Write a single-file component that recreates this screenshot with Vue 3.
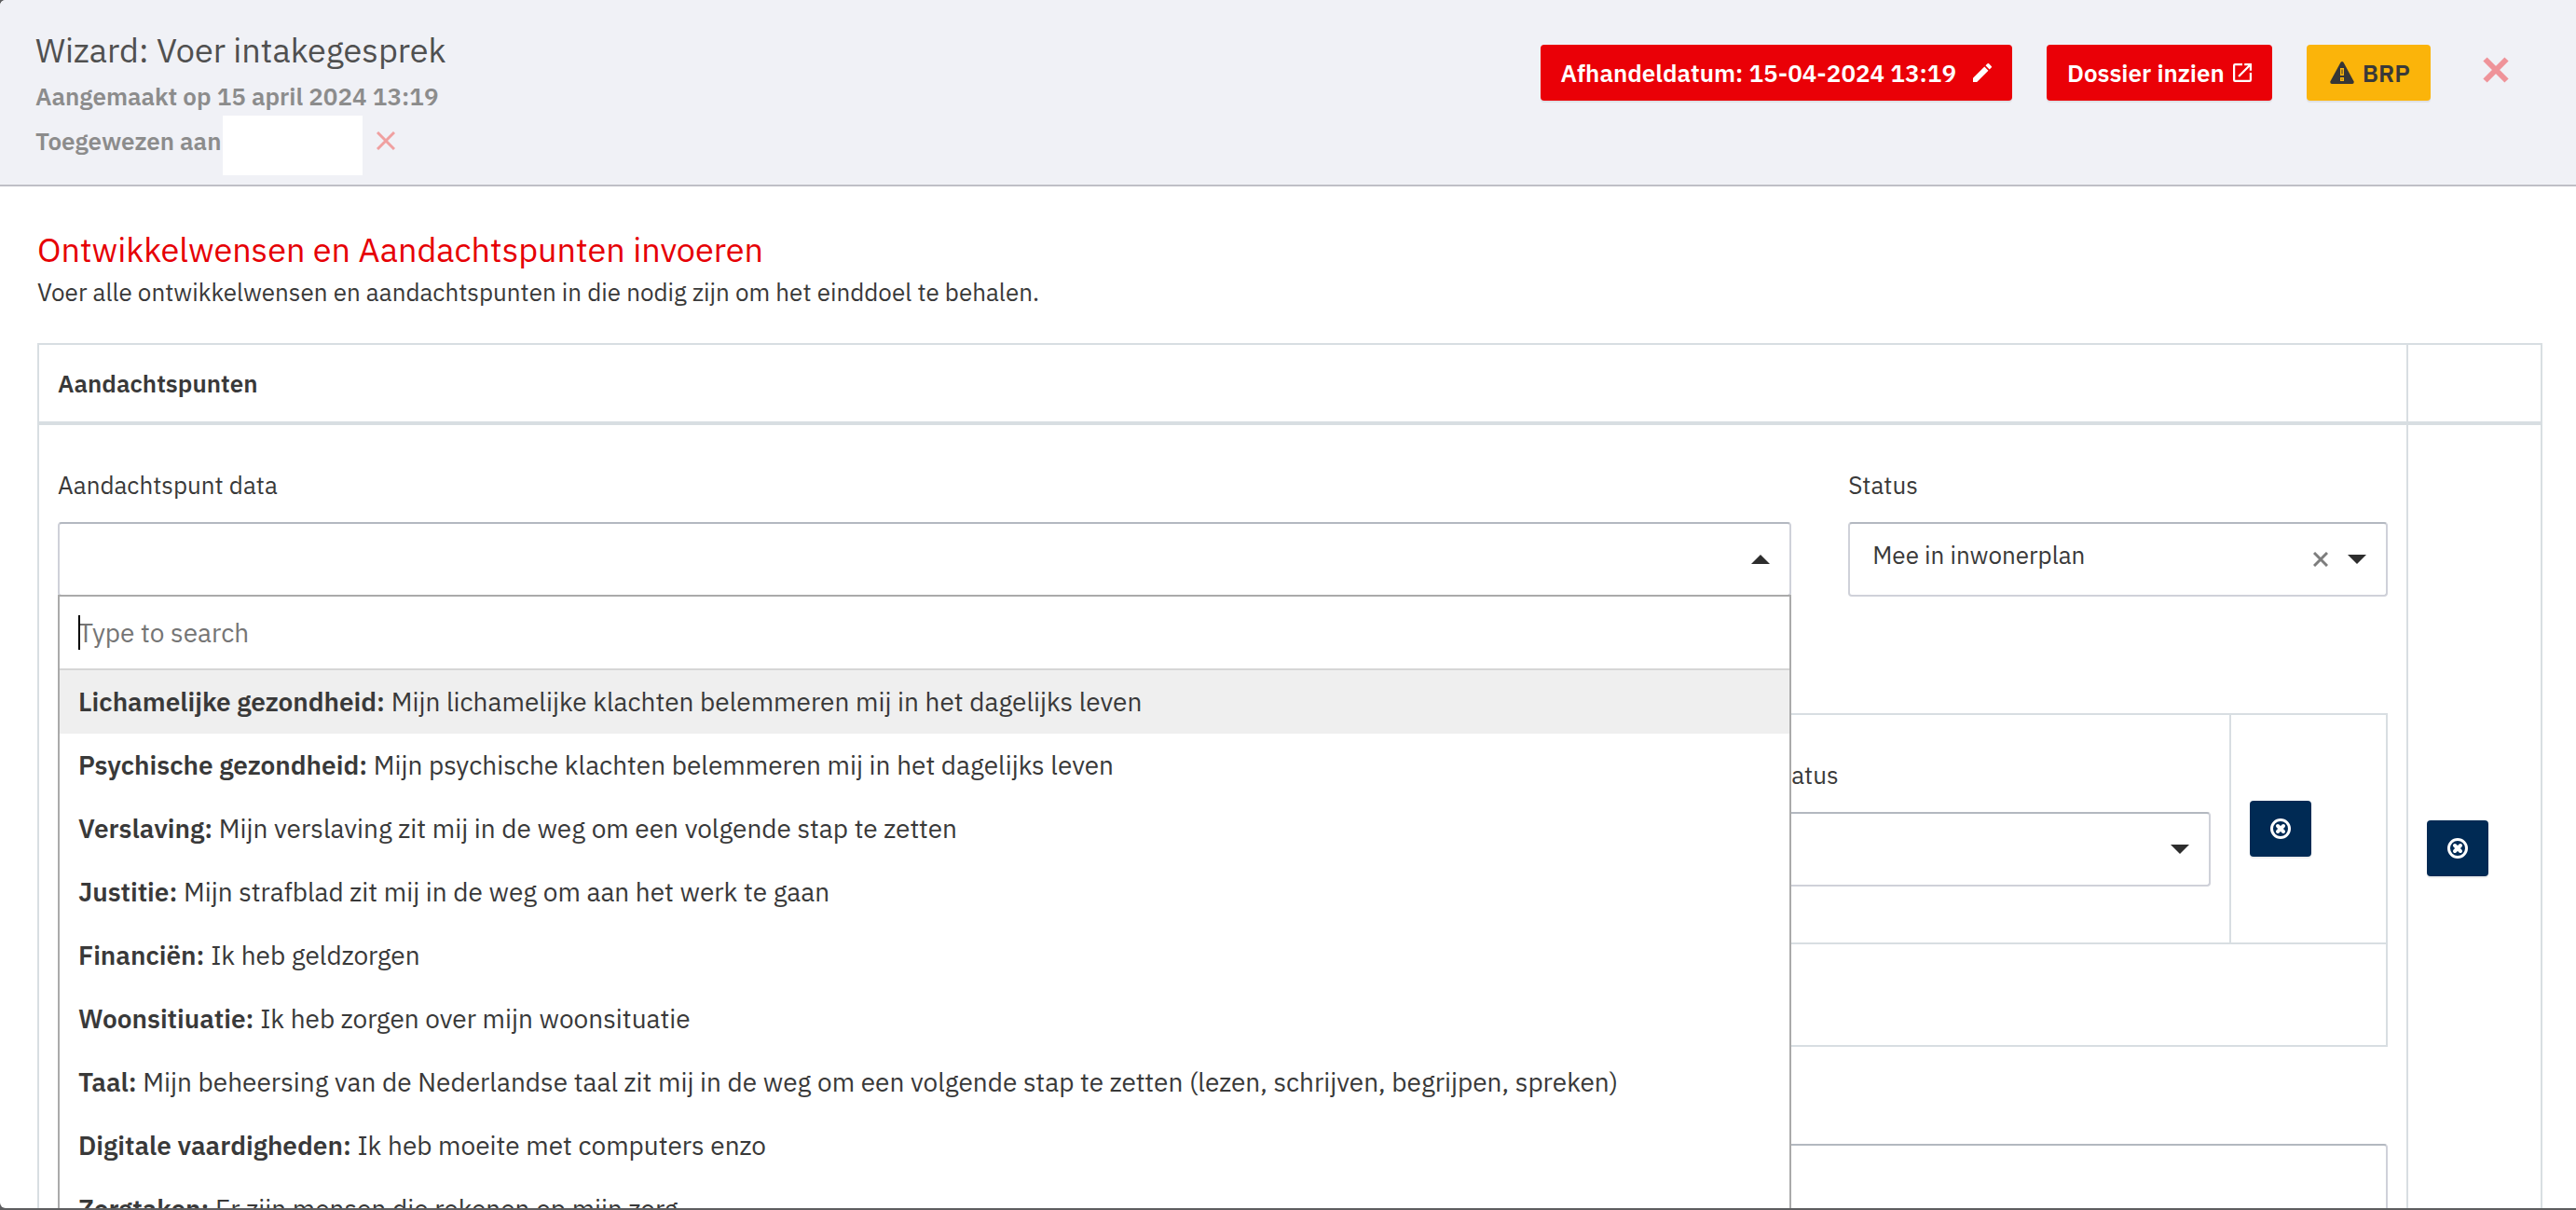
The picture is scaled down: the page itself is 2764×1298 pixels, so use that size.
<script setup>
import { ref } from 'vue'

const status = ref('mee')
const search = ref('')
const options = [
  { name: 'Lichamelijke gezondheid:', text: 'Mijn lichamelijke klachten belemmeren mij in het dagelijks leven' },
  { name: 'Psychische gezondheid:', text: 'Mijn psychische klachten belemmeren mij in het dagelijks leven' },
  { name: 'Verslaving:', text: 'Mijn verslaving zit mij in de weg om een volgende stap te zetten' },
  { name: 'Justitie:', text: 'Mijn strafblad zit mij in de weg om aan het werk te gaan' },
  { name: 'Financiën:', text: 'Ik heb geldzorgen' },
  { name: 'Woonsitiuatie:', text: 'Ik heb zorgen over mijn woonsituatie' },
  { name: 'Taal:', text: 'Mijn beheersing van de Nederlandse taal zit mij in de weg om een volgende stap te zetten (lezen, schrijven, begrijpen, spreken)' },
  { name: 'Digitale vaardigheden:', text: 'Ik heb moeite met computers enzo' },
  { name: 'Zorgtaken:', text: 'Er zijn mensen die rekenen op mijn zorg...' }
]
</script>

<template>
  <div class="page">
    <main class="panel">
      <header class="top">
        <div class="heading">
          <h1>Wizard: Voer intakegesprek</h1>
          <p>Aangemaakt op 15 april 2024 13:19</p>
          <div class="assigned">
            <p>Toegewezen aan</p>
            <span class="assignee"></span>
            <button class="plain unassign" aria-label="Toewijzing verwijderen">
              <svg width="20" height="20" viewBox="0 0 20 20"><path d="M1 1l18 18M19 1L1 19" stroke="#f0a0a0" stroke-width="3" fill="none" /></svg>
            </button>
          </div>
        </div>
        <div class="actions">
          <button class="btn red wide">
            Afhandeldatum: 15-04-2024 13:19
            <svg width="20" height="20" viewBox="3 3 18 18"><path fill="#fff" d="M3 17.25V21h3.75L17.81 9.94l-3.75-3.75L3 17.25zM20.71 7.04a1 1 0 0 0 0-1.41l-2.34-2.34a1 1 0 0 0-1.41 0l-1.83 1.83 3.75 3.75 1.83-1.83z" /></svg>
          </button>
          <button class="btn red">
            Dossier inzien
            <svg width="20" height="20" viewBox="3 3 18 18"><path fill="#fff" d="M19 19H5V5h7V3H5a2 2 0 0 0-2 2v14a2 2 0 0 0 2 2h14a2 2 0 0 0 2-2v-7h-2v7zM14 3v2h3.59l-9.83 9.83 1.41 1.41L19 6.41V10h2V3h-7z" /></svg>
          </button>
          <button class="btn yellow">
            <svg width="26" height="24" viewBox="0 0 26 24"><path d="M11.400 1q1.600-2 3.200 0L25.700 21.500Q26 24 24 24H2Q0 24 .3 21.500Z" fill="#363636" /><path d="M11 7h4v8h-4zM11 17h4v4h-4z" fill="#fbb40a" /><path d="M12.500 8.500h1v5h-1zM12.500 18.500h1v1h-1z" fill="#363636" /></svg>
            BRP
          </button>
          <button class="plain close" aria-label="Sluiten">
            <svg width="28" height="28" viewBox="0 0 28 28"><path d="M2.500 2.500l23 23M25.500 2.500l-23 23" stroke="#ef9399" stroke-width="6" fill="none" /></svg>
          </button>
        </div>
      </header>

      <section class="content">
        <h2>Ontwikkelwensen en Aandachtspunten invoeren</h2>
        <p class="intro">Voer alle ontwikkelwensen en aandachtspunten in die nodig zijn om het einddoel te behalen.</p>

        <table class="grid outer">
          <thead>
            <tr>
              <th scope="col">Aandachtspunten</th>
              <th class="tools"></th>
            </tr>
          </thead>
          <tbody>
            <tr>
              <td>
                <div class="fields">
                  <div class="field">
                    <span id="data-label" class="label">Aandachtspunt data</span>
                    <div class="combo">
                      <button class="control" role="combobox" aria-expanded="true" aria-controls="data-list" aria-labelledby="data-label"></button>
                      <svg class="arrow" width="20" height="10" viewBox="0 0 20 10"><path d="M0 10L10 0l10 10z" fill="#2d2d2d" /></svg>
                      <div class="dropdown">
                        <div class="search">
                          <input v-model="search" type="text" placeholder="Type to search" aria-label="Type to search" />
                        </div>
                        <ul id="data-list" role="listbox" aria-labelledby="data-label">
                          <li v-for="(o, i) in options" :key="o.name" role="option" :aria-selected="i === 0" :class="{ active: i === 0 }">
                            <b>{{ o.name }}</b> {{ o.text }}
                          </li>
                        </ul>
                      </div>
                    </div>
                  </div>
                  <div class="field">
                    <label class="label" for="status">Status</label>
                    <div class="combo">
                      <select id="status" v-model="status" class="control">
                        <option value=""></option>
                        <option value="mee">Mee in inwonerplan</option>
                      </select>
                      <button class="plain clear" aria-label="Wissen" @click="status = ''">
                        <svg width="16" height="16" viewBox="0 0 16 16"><path d="M1 1l14 14M15 1L1 15" stroke="#7d7d7d" stroke-width="3" fill="none" /></svg>
                      </button>
                      <svg class="arrow" width="20" height="10" viewBox="0 0 20 10"><path d="M0 0h20L10 10z" fill="#2d2d2d" /></svg>
                    </div>
                  </div>
                </div>

                <table class="grid nested">
                  <tbody>
                    <tr>
                      <td>
                        <div class="fields nested-fields">
                          <div class="field">
                            <label class="label" for="nested-status">Status</label>
                            <div class="combo">
                              <select id="nested-status" class="control"><option value=""></option></select>
                              <svg class="arrow" width="20" height="10" viewBox="0 0 20 10"><path d="M0 0h20L10 10z" fill="#2d2d2d" /></svg>
                            </div>
                          </div>
                        </div>
                      </td>
                      <td class="nested-tools">
                        <button class="remove" aria-label="Verwijderen">
                          <svg width="22" height="22" viewBox="0 0 22 22"><circle cx="11" cy="11" r="9.500" fill="none" stroke="#fff" stroke-width="3" /><path d="M8 8l6 6M14 8l-6 6" stroke="#fff" stroke-width="4" stroke-linecap="round" /></svg>
                        </button>
                      </td>
                    </tr>
                    <tr class="foot"><td colspan="2"></td></tr>
                  </tbody>
                </table>

                <div class="field note">
                  <span class="label"></span>
                  <textarea class="control" aria-label="Toelichting"></textarea>
                </div>
              </td>
              <td class="tools">
                <button class="remove" aria-label="Verwijderen">
                  <svg width="22" height="22" viewBox="0 0 22 22"><circle cx="11" cy="11" r="9.500" fill="none" stroke="#fff" stroke-width="3" /><path d="M8 8l6 6M14 8l-6 6" stroke="#fff" stroke-width="4" stroke-linecap="round" /></svg>
                </button>
              </td>
            </tr>
          </tbody>
        </table>
      </section>
    </main>
  </div>
</template>

<style>
body {
  background: #5e5e60;
}
</style>

<style scoped>
* {
  box-sizing: border-box;
}
.page {
  height: 100vh;
  padding-bottom: 2px;
  background: #5e5e60;
  color: #393939;
  font-family: 'IBM Plex Sans', 'Open Sans', sans-serif;
  font-size: 26px;
}
.panel {
  height: 100%;
  overflow: hidden;
  border-radius: 6px 0 0 6px;
  background: #fff;
}
h1, h2, p, ul {
  margin: 0;
  padding: 0;
}
button, input, select, textarea {
  font: inherit;
  color: inherit;
}
svg {
  display: block;
  flex: none;
}
.plain {
  padding: 0;
  border: 0;
  background: none;
}
.top {
  display: flex;
  justify-content: space-between;
  align-items: flex-start;
  height: 200px;
  padding: 30px 72px 0 38px;
  background: #f0f1f6;
  border-bottom: 2px solid #bfbfc6;
}
h1 {
  margin-bottom: 1px;
  font-size: 36px;
  line-height: 48px;
  font-weight: 400;
  color: #505050;
}
.heading p {
  line-height: 48px;
  font-weight: 600;
  color: #8c8c8c;
}
.assigned {
  display: flex;
  align-items: flex-start;
}
.assignee {
  width: 150px;
  height: 64px;
  margin: -3px 0 0 2px;
  background: #fff;
}
.unassign {
  height: 48px;
  margin-left: 15px;
}
.actions {
  display: flex;
  align-items: center;
  padding-top: 18px;
  gap: 37px;
}
.btn {
  display: flex;
  align-items: center;
  gap: 9px;
  height: 60px;
  padding: 0 22px;
  border: 0;
  border-radius: 4px;
  box-shadow: 0 2px 1px rgba(0, 0, 0, 0.07);
  font-weight: 600;
}
.wide {
  gap: 18px;
}
.red {
  background: #ea0007;
  color: #fff;
}
.yellow {
  padding: 0 22px 0 25px;
  background: #fbb40a;
  color: #393939;
}
.close {
  margin: 0 0 6px 19px;
}
.content {
  padding: 44px 36px 0 40px;
}
h2 {
  font-size: 36px;
  line-height: 48px;
  font-weight: 400;
  color: #e60005;
}
.intro {
  line-height: 42px;
}
.grid {
  width: 100%;
  border: 2px solid #d8dee2;
  border-spacing: 0;
}
.outer {
  margin-top: 34px;
}
th {
  height: 86px;
  padding: 0 20px;
  border-bottom: 4px solid #d8dee2;
  text-align: left;
  font-weight: 600;
}
td {
  padding: 0 20px;
}
.tools {
  width: 144px;
  border-left: 2px solid #d8dee2;
}
.fields {
  display: grid;
  grid-template-columns: 45fr 14fr;
  gap: 61px;
  padding-bottom: 60px;
}
.field {
  padding-top: 44px;
}
.label {
  display: block;
  height: 40px;
  margin-bottom: 20px;
  line-height: 40px;
}
.combo {
  position: relative;
}
.control {
  display: block;
  appearance: none;
  width: 100%;
  height: 80px;
  padding: 0 100px 10px 24px;
  border: 2px solid #cfd1d9;
  border-top-color: #b3b8c0;
  border-radius: 4px;
  background: #fff;
  resize: none;
}
.arrow {
  position: absolute;
  top: 35px;
  right: 23px;
  pointer-events: none;
}
.clear {
  position: absolute;
  top: 32px;
  right: 64px;
}
.dropdown {
  position: absolute;
  z-index: 2;
  top: 78px;
  left: 0;
  right: 0;
  border: 2px solid #aaa;
  background: #fff;
  font-size: 28px;
}
.search {
  position: relative;
  height: 79px;
  padding: 0 20px;
  border-bottom: 2px solid #d6d6d6;
}
.search::before {
  content: '';
  position: absolute;
  top: 20px;
  left: 20px;
  width: 2px;
  height: 37px;
  background: #000;
}
.search input {
  width: 100%;
  height: 77px;
  padding: 0;
  border: 0;
  outline: 0;
  background: none;
}
.search input::placeholder {
  color: #757575;
}
li {
  padding: 0 20px;
  line-height: 68px;
  list-style: none;
  white-space: nowrap;
}
li b {
  font-weight: 600;
}
.active {
  background: #efefef;
}
.nested {
  margin-top: 65px;
}
.nested-fields {
  grid-template-columns: 474px;
  justify-content: end;
}
.nested-tools {
  width: 168px;
  border-left: 2px solid #d8dee2;
}
.foot td {
  height: 110px;
  border-top: 2px solid #d8dee2;
}
.note {
  padding-bottom: 56px;
}
.remove {
  display: flex;
  align-items: center;
  justify-content: center;
  width: 66px;
  height: 60px;
  padding: 0;
  border: 0;
  border-radius: 4px;
  background: #002a54;
  box-shadow: 0 2px 1px rgba(0, 0, 0, 0.07);
}
</style>
